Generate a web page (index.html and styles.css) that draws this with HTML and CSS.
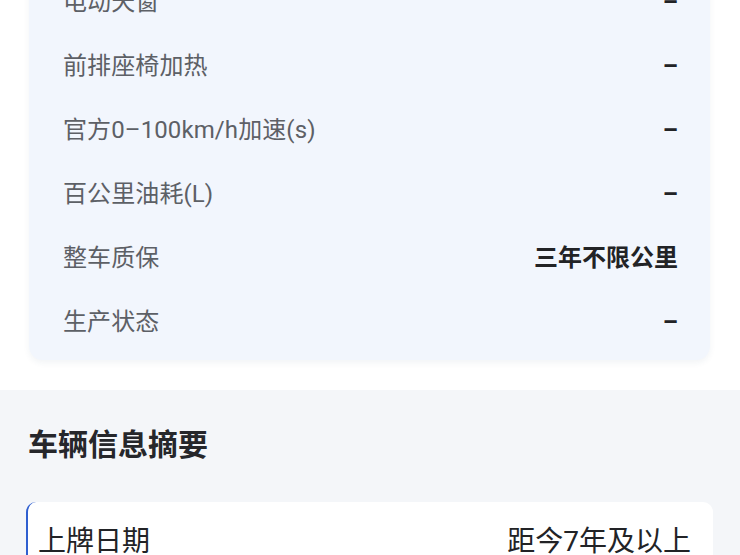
FILE: index.html
```html
<!DOCTYPE html>
<html lang="zh">
<head>
<meta charset="utf-8">
<link rel="stylesheet" href="styles.css">
</head>
<body>
<div class="page">
  <div class="top">
    <div class="spec-card">
      <div class="row"><span class="label">电动天窗</span><span class="value">–</span></div>
      <div class="row"><span class="label">前排座椅加热</span><span class="value">–</span></div>
      <div class="row"><span class="label">官方0–100km/h加速(s)</span><span class="value">–</span></div>
      <div class="row"><span class="label">百公里油耗(L)</span><span class="value">–</span></div>
      <div class="row"><span class="label">整车质保</span><span class="value">三年不限公里</span></div>
      <div class="row"><span class="label">生产状态</span><span class="value">–</span></div>
    </div>
  </div>
  <div class="summary">
    <h2 class="title">车辆信息摘要</h2>
    <div class="info-card">
      <div class="info-row"><span class="info-label">上牌日期</span><span class="info-value">距今7年及以上</span></div>
    </div>
  </div>
</div>
</body>
</html>
```
FILE: styles.css
```css
html, body {
  margin: 0;
  padding: 0;
  background: #ffffff;
  overflow: hidden;
  width: 740px;
  height: 555px;
  font-family: "Roboto", "Noto Sans CJK SC", sans-serif;
}
.page {
  display: flex;
  flex-direction: column;
}
.top {
  background: #ffffff;
  padding: 0 30px 30px 29px;
  margin-top: -30px;
}
.spec-card {
  background: #f2f6fd;
  border-radius: 0 0 14px 14px;
  box-shadow: 0 3px 6px rgba(40, 60, 100, 0.06);
  padding: 0 32px 6px 34px;
}
.row {
  height: 64px;
  display: flex;
  align-items: center;
  justify-content: space-between;
}
.label {
  font-size: 24px;
  color: #5d6066;
  line-height: 1;
  letter-spacing: 0.1px;
}
.value {
  font-size: 24px;
  font-weight: 700;
  color: #222326;
  line-height: 1;
}
.summary {
  background: #f4f6f9;
  padding: 20px 27px 0 26px;
  flex: 1;
  height: 200px;
}
.title {
  margin: 0;
  font-size: 30px;
  font-weight: 700;
  color: #26272b;
  line-height: 70px;
  padding-left: 2px;
}
.info-card {
  margin-top: 22px;
  background: #ffffff;
  border-radius: 10px;
  border-left: 2px solid #2f5fd0;
  height: 120px;
}
.info-row {
  display: flex;
  justify-content: space-between;
  align-items: center;
  padding: 20px 22px 0 10px;
}
.info-label, .info-value {
  font-size: 28px;
  color: #222326;
  line-height: 40px;
}
```
